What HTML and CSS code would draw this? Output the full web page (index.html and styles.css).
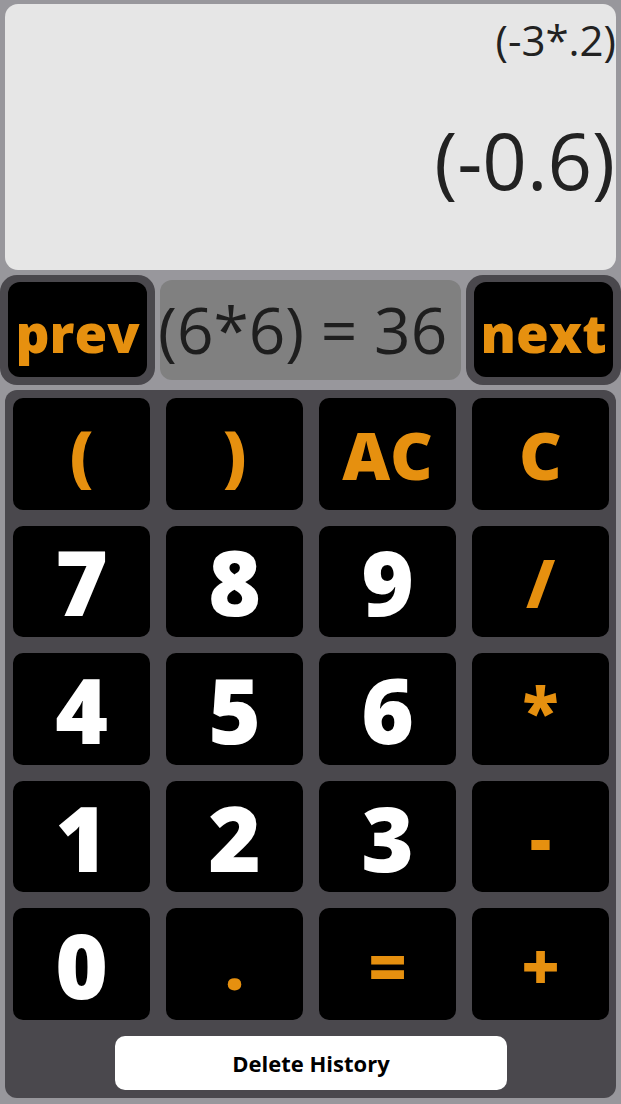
FILE: index.html
```html
<!DOCTYPE html>
<html lang="en">
<head>
<meta charset="utf-8">
<title>Calculator</title>
<link rel="stylesheet" href="styles.css">
</head>
<body>
<div class="app">
  <section class="display">
    <div class="expr">(-3*.2)</div>
    <div class="result">(-0.6)</div>
  </section>
  <section class="history">
    <div class="nav"><button class="nav-btn">prev</button></div>
    <div class="hist-text">(6*6) = 36</div>
    <div class="nav"><button class="nav-btn">next</button></div>
  </section>
  <section class="keypad">
    <div class="keys">
      <button class="key op">(</button>
      <button class="key op">)</button>
      <button class="key op">AC</button>
      <button class="key op">C</button>
      <button class="key num">7</button>
      <button class="key num">8</button>
      <button class="key num">9</button>
      <button class="key op">/</button>
      <button class="key num">4</button>
      <button class="key num">5</button>
      <button class="key num">6</button>
      <button class="key op">*</button>
      <button class="key num">1</button>
      <button class="key num">2</button>
      <button class="key num">3</button>
      <button class="key op">-</button>
      <button class="key num">0</button>
      <button class="key op">.</button>
      <button class="key op">=</button>
      <button class="key op">+</button>
    </div>
    <div class="footer"><button class="delete">Delete History</button></div>
  </section>
</div>
</body>
</html>
```
FILE: styles.css
```css
* { box-sizing: border-box; }
html, body { margin: 0; padding: 0; }
body {
  background: #98979c;
  font-family: "Open Sans", "Noto Sans", sans-serif;
  width: 621px;
  height: 1104px;
  overflow: hidden;
}
button {
  font-family: inherit;
  border: none;
  padding: 0;
  margin: 0;
  cursor: pointer;
}
.app {
  display: flex;
  flex-direction: column;
  padding-top: 4px;
}
.display {
  margin: 0 5px;
  height: 266px;
  background: #e6e6e6;
  border-radius: 13px;
  padding: 12px 0 0 0;
  color: #222222;
  text-align: right;
}
.expr {
  font-size: 42px;
  line-height: 48px;
}
.result {
  font-size: 78px;
  line-height: 80px;
  margin-top: 56px;
  padding-right: 1px;
}
.history {
  display: flex;
  gap: 5px;
  margin-top: 5px;
  height: 110px;
}
.nav {
  width: 155px;
  flex: 0 0 155px;
  background: #4a484d;
  border-radius: 17px;
  padding: 7px 8px 8px 8px;
  display: flex;
}
.nav-btn {
  flex: 1;
  background: #000000;
  color: #e6900f;
  border-radius: 12px;
  font-size: 53px;
  font-weight: 800;
  line-height: 1;
  padding-top: 5px;
  display: flex;
  align-items: center;
  justify-content: center;
}
.hist-text {
  flex: 1;
  margin: 5px 0;
  background: #808080;
  border-radius: 12px;
  color: #1e1e1e;
  font-size: 64px;
  font-weight: 400;
  line-height: 100px;
  white-space: nowrap;
  overflow: visible;
  padding-left: 0;
  text-indent: -2px;
}
.keypad {
  margin: 5px 5px 0 5px;
  background: #4a484d;
  border-radius: 12px;
  padding: 8px 7px 8px 8px;
}
.keys {
  display: grid;
  grid-template-columns: repeat(4, 1fr);
  grid-auto-rows: 111.6px;
  gap: 16px;
}
.key {
  background: #000000;
  border-radius: 10px;
  font-weight: 800;
  line-height: 1;
  display: flex;
  align-items: center;
  justify-content: center;
}
.num {
  color: #ffffff;
  font-size: 90px;
}
.op {
  color: #e6900f;
  font-size: 66px;
}
.footer {
  display: flex;
  justify-content: center;
  margin-top: 16px;
}
.delete {
  width: 392px;
  height: 54px;
  background: #ffffff;
  color: #000000;
  border-radius: 10px;
  font-size: 22px;
  font-weight: 700;
}
```
